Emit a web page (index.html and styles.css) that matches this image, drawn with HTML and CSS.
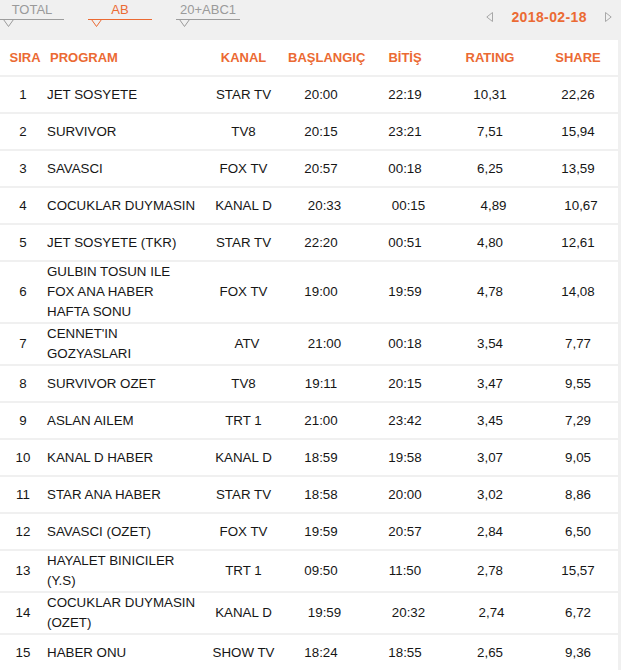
FILE: index.html
```html
<!DOCTYPE html>
<html lang="tr">
<head>
<meta charset="utf-8">
<title>Rating</title>
<link rel="stylesheet" href="styles.css">
</head>
<body>
<div class="topbar">
  <div class="tabs">
    <div class="tab">TOTAL<svg class="notch" width="11" height="9" viewBox="0 0 11 9"><polyline points="0.5,0.5 5.5,7.5 10.5,0.5" fill="none" stroke="currentColor" stroke-width="1"/></svg></div>
    <div class="tab active">AB<svg class="notch" width="11" height="9" viewBox="0 0 11 9"><polyline points="0.5,0.5 5.5,7.5 10.5,0.5" fill="none" stroke="currentColor" stroke-width="1"/></svg></div>
    <div class="tab">20+ABC1<svg class="notch" width="11" height="9" viewBox="0 0 11 9"><polyline points="0.5,0.5 5.5,7.5 10.5,0.5" fill="none" stroke="currentColor" stroke-width="1"/></svg></div>
  </div>
  <div class="datenav">
    <svg class="arrow" width="7" height="10" viewBox="0 0 7 10"><polygon points="6.5,0.5 0.8,5 6.5,9.5" fill="none" stroke="#a8a8a8" stroke-width="1"/></svg>
    <span class="date">2018-02-18</span>
    <svg class="arrow" width="7" height="10" viewBox="0 0 7 10"><polygon points="0.5,0.5 6.2,5 0.5,9.5" fill="none" stroke="#a8a8a8" stroke-width="1"/></svg>
  </div>
</div>
<table class="ratings">
  <colgroup>
    <col class="c-sira"><col class="c-prog"><col class="c-kanal"><col class="c-bas"><col class="c-bit"><col class="c-rat"><col class="c-share">
  </colgroup>
  <thead>
    <tr><th class="sira">SIRA</th><th class="prog">PROGRAM</th><th>KANAL</th><th>BAŞLANGIÇ</th><th>BİTİŞ</th><th>RATING</th><th class="share">SHARE</th></tr>
  </thead>
  <tbody>
    <tr><td>1</td><td class="prog">JET SOSYETE</td><td>STAR TV</td><td>20:00</td><td>22:19</td><td>10,31</td><td class="share">22,26</td></tr>
    <tr><td>2</td><td class="prog">SURVIVOR</td><td>TV8</td><td>20:15</td><td>23:21</td><td>7,51</td><td class="share">15,94</td></tr>
    <tr><td>3</td><td class="prog">SAVASCI</td><td>FOX TV</td><td>20:57</td><td>00:18</td><td>6,25</td><td class="share">13,59</td></tr>
    <tr><td>4</td><td class="prog">COCUKLAR DUYMASIN</td><td>KANAL D</td><td class="off">20:33</td><td class="off">00:15</td><td class="off">4,89</td><td class="share off">10,67</td></tr>
    <tr><td>5</td><td class="prog">JET SOSYETE (TKR)</td><td>STAR TV</td><td>22:20</td><td>00:51</td><td>4,80</td><td class="share">12,61</td></tr>
    <tr><td>6</td><td class="prog">GULBIN TOSUN ILE FOX ANA HABER HAFTA SONU</td><td>FOX TV</td><td>19:00</td><td>19:59</td><td>4,78</td><td class="share">14,08</td></tr>
    <tr><td>7</td><td class="prog">CENNET'IN GOZYASLARI</td><td class="off">ATV</td><td class="off">21:00</td><td>00:18</td><td>3,54</td><td class="share">7,77</td></tr>
    <tr><td>8</td><td class="prog">SURVIVOR OZET</td><td>TV8</td><td>19:11</td><td>20:15</td><td>3,47</td><td class="share">9,55</td></tr>
    <tr><td>9</td><td class="prog">ASLAN AILEM</td><td>TRT 1</td><td>21:00</td><td>23:42</td><td>3,45</td><td class="share">7,29</td></tr>
    <tr><td>10</td><td class="prog">KANAL D HABER</td><td>KANAL D</td><td>18:59</td><td>19:58</td><td>3,07</td><td class="share">9,05</td></tr>
    <tr><td>11</td><td class="prog">STAR ANA HABER</td><td>STAR TV</td><td>18:58</td><td>20:00</td><td>3,02</td><td class="share">8,86</td></tr>
    <tr><td>12</td><td class="prog">SAVASCI (OZET)</td><td>FOX TV</td><td>19:59</td><td>20:57</td><td>2,84</td><td class="share">6,50</td></tr>
    <tr><td>13</td><td class="prog">HAYALET BINICILER (Y.S)</td><td>TRT 1</td><td>09:50</td><td>11:50</td><td>2,78</td><td class="share">15,57</td></tr>
    <tr><td>14</td><td class="prog">COCUKLAR DUYMASIN (OZET)</td><td>KANAL D</td><td class="off">19:59</td><td class="off">20:32</td><td class="off-s">2,74</td><td class="share">6,72</td></tr>
    <tr><td>15</td><td class="prog">HABER ONU</td><td>SHOW TV</td><td>18:24</td><td>18:55</td><td>2,65</td><td class="share">9,36</td></tr>
  </tbody>
</table>
</body>
</html>
```

FILE: styles.css
```css
html, body {
  margin: 0;
  padding: 0;
  overflow: hidden;
  background: #f0f0f0;
}

body {
  font-family: "Liberation Sans", Arial, sans-serif;
  color: #161616;
}

.topbar {
  display: flex;
  justify-content: space-between;
  align-items: flex-start;
  height: 38px;
}

.tabs {
  display: flex;
  gap: 24px;
}

.tab {
  position: relative;
  box-sizing: border-box;
  width: 64px;
  height: 20px;
  padding-top: 2px;
  border-bottom: 1px solid #9d9d9d;
  text-align: center;
  font-size: 13px;
  line-height: 16px;
  color: #9a9a9a;
}

.tab.active {
  color: #eb6a33;
  border-bottom-color: #eb6a33;
}

.notch {
  position: absolute;
  left: 3px;
  top: 19px;
  display: block;
}

.datenav {
  display: flex;
  align-items: center;
  height: 33px;
  padding-right: 9px;
}

.arrow {
  display: block;
}

.date {
  margin: 0 18px;
  font-size: 14px;
  font-weight: bold;
  letter-spacing: 0.4px;
  color: #eb6a33;
}

.ratings {
  width: 618px;
  table-layout: fixed;
  border-collapse: separate;
  border-spacing: 0 2px;
  font-size: 10pt;
}

.c-sira { width: 46px; }
.c-prog { width: 153px; }
.c-kanal { width: 89px; }
.c-bas { width: 66px; }
.c-bit { width: 102px; }
.c-rat { width: 68px; }
.c-share { width: 94px; }

.ratings th,
.ratings td {
  background: #fff;
  height: 35px;
  padding: 0;
  line-height: 20px;
  text-align: center;
  vertical-align: middle;
}

.ratings th {
  font-size: 13px;
  font-weight: bold;
  color: #eb6a33;
}

.ratings th.sira {
  padding-left: 4px;
}

.ratings th.prog {
  text-align: left;
  padding-left: 4px;
}

.ratings td.prog {
  text-align: left;
  padding-left: 1px;
}

.ratings .share {
  padding-left: 14px;
}

.ratings td.off {
  padding-left: 7px;
}

.ratings td.share.off {
  padding-left: 20px;
}

.ratings td.off-s {
  padding-left: 3px;
}
```
